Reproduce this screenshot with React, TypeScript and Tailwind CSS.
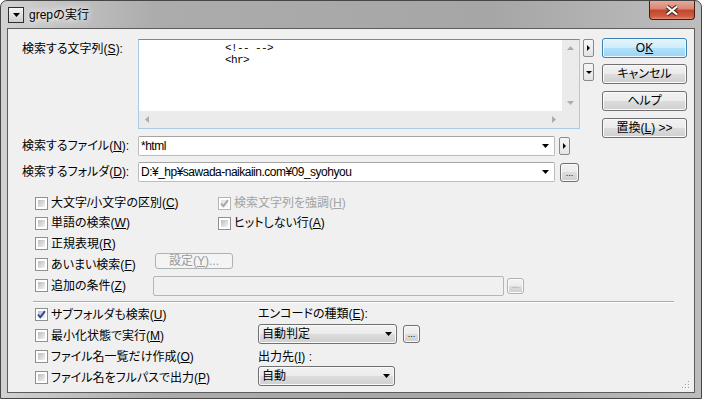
import React from "react";

type Node = React.ReactNode;

const face =
  "rounded-[3px] border border-[#707070] bg-[linear-gradient(#f2f2f2,#ebebeb_50%,#dddddd_50%,#cfcfcf)] shadow-[inset_0_0_0_1px_#fbfbfb]";
const btn = `flex items-center justify-center ${face}`;

const DownArrow = ({ color = "#000" }: { color?: string }) => (
  <svg width="7" height="4" viewBox="0 0 7 4">
    <polygon points="0,0 7,0 3.5,4" fill={color} />
  </svg>
);

function Box({ checked, disabled }: { checked?: boolean; disabled?: boolean }) {
  return (
    <div
      className={`relative w-[13px] h-[13px] shrink-0 border bg-white p-[2px] ${
        disabled ? "border-[#b4b4b4]" : "border-[#8e8f8f]"
      }`}
    >
      <div
        className={`w-full h-full ${
          disabled
            ? "bg-[linear-gradient(135deg,#e0e0e0,#f7f7f7)]"
            : "bg-[linear-gradient(135deg,#b9bdc2,#f2f2f2)]"
        }`}
      />
      {checked && (
        <svg className="absolute inset-0" width="11" height="11" viewBox="0 0 11 11">
          <path
            d="M2 5.5 L4.3 8.2 L9 2.2"
            fill="none"
            stroke={disabled ? "#a6a6a6" : "#2c4a9a"}
            strokeWidth="1.9"
          />
        </svg>
      )}
    </div>
  );
}

function Check({ label, checked, disabled }: { label: Node; checked?: boolean; disabled?: boolean }) {
  return (
    <div className="flex items-center">
      <Box checked={checked} disabled={disabled} />
      <span className={`ml-[3px] whitespace-nowrap ${disabled ? "text-[#a3a3a3]" : ""}`}>{label}</span>
    </div>
  );
}

function SideBtn({ dir, className = "" }: { dir: "right" | "down"; className?: string }) {
  return (
    <div
      className={`w-[11px] h-[18px] flex items-center justify-center rounded-[2px] border border-[#8a8a8a] bg-[linear-gradient(#f6f6f6,#e4e4e4)] ${className}`}
    >
      {dir === "right" ? (
        <svg width="3" height="6" viewBox="0 0 3 6">
          <polygon points="0,0 3,3 0,6" fill="#000" />
        </svg>
      ) : (
        <svg width="6" height="3" viewBox="0 0 6 3">
          <polygon points="0,0 6,0 3,3" fill="#000" />
        </svg>
      )}
    </div>
  );
}

function Dots({ className = "", disabled }: { className?: string; disabled?: boolean }) {
  return (
    <div
      className={`${btn} items-end pb-[3px] text-[9px] leading-none ${
        disabled ? "border-[#adb2b5] text-[#9a9a9a] bg-[#f4f4f4]" : ""
      } ${className}`}
    >
      ...
    </div>
  );
}

function Combo({ text, w }: { text: string; w: string }) {
  return (
    <div
      className={`${w} h-[20px] flex items-center rounded-[2px] border border-[#bcbcbc] border-t-[#a3a3a3] bg-white pl-[2px] pr-[5px]`}
    >
      <span className="flex-1 whitespace-nowrap tracking-[-0.5px]">{text}</span>
      <DownArrow />
    </div>
  );
}

function Select({ text, w }: { text: string; w: string }) {
  return (
    <div className={`${face} ${w} h-[20px] flex items-center justify-between pl-[3px] pr-[4px]`}>
      <span>{text}</span>
      <DownArrow />
    </div>
  );
}

const Tri = ({ pts }: { pts: string }) => (
  <svg width="7" height="7" viewBox="0 0 7 7">
    <polygon points={pts} fill="#acacac" />
  </svg>
);

function TextArea() {
  return (
    <div className="w-[442px] h-[90px] border border-[#a9cbe6] border-t-[#5d90bd] bg-white grid grid-cols-[1fr_17px] grid-rows-[1fr_17px]">
      <div className="pt-[2px] pl-[86px] whitespace-pre [font-family:'Liberation_Mono',monospace] text-[11px] tracking-[-0.6px] leading-[12px]">
        {"<!-- -->\n<hr>"}
      </div>
      <div className="bg-[#ebebeb] flex flex-col items-center justify-between py-[5px]">
        <Tri pts="0,5 7,5 3.5,1" />
        <Tri pts="0,2 7,2 3.5,6" />
      </div>
      <div className="bg-[#ebebeb] flex items-center justify-between px-[5px]">
        <Tri pts="5,0 5,7 1,3.5" />
        <Tri pts="2,0 2,7 6,3.5" />
      </div>
      <div className="bg-[#ebebeb]" />
    </div>
  );
}

export default function App() {
  return (
    <div className="w-[702px] h-[399px] [font-family:'Liberation_Sans','Noto_Sans_CJK_JP',sans-serif] [font-feature-settings:'palt'] text-[12px] leading-none text-black">
      <div className="w-full h-full flex flex-col rounded-t-[7px] border border-[#464646] bg-[linear-gradient(to_right,#d2d2d2,#acacac_22%,#a6a6a6_70%,#bdbdbd)]">
        {/* title bar */}
        <div className="h-[27px] flex items-start">
          <div className="ml-[7px] mt-[6px] w-[16px] h-[16px] flex items-center justify-center border border-[#2e2e2e] bg-[linear-gradient(#f4f4f4,#cdcdcd)]">
            <DownArrow />
          </div>
          <div className="ml-[5px] mt-[6px] h-[16px] flex items-center [font-feature-settings:normal] [text-shadow:0_0_6px_#fff,0_0_10px_#fff]">
            grepの実行
          </div>
          <div className="flex-1" />
          <div className="mr-[6px] w-[46px] h-[19px] rounded-b-[4px] border border-t-0 border-[#4a1c12] bg-[linear-gradient(#e8a99b,#d58672_45%,#c2452c_50%,#cf5a42_85%,#e08b74)] flex items-center justify-center">
            <svg width="14" height="11" viewBox="0 0 14 11">
              <path d="M2 1.5 L12 9.5 M12 1.5 L2 9.5" stroke="#4a2a24" strokeWidth="4.2" />
              <path d="M2 1.5 L12 9.5 M12 1.5 L2 9.5" stroke="#ffffff" strokeWidth="2.2" />
            </svg>
          </div>
        </div>

        {/* client area */}
        <div className="relative mx-[6px] h-[365px] border border-[#5c5c5c] bg-[#f0f0f0] flex flex-col">
          <div className="flex pt-[9px] pl-[14px]">
            <div className="w-[580px] flex flex-col">
              <div className="flex items-start mt-[1px]">
                <div className="w-[116px] h-[19px] flex items-center">
                  検索する文字列(<u>S</u>):
                </div>
                <TextArea />
                <div className="ml-[3px] flex flex-col">
                  <SideBtn dir="right" />
                  <SideBtn dir="down" className="mt-[6px]" />
                </div>
              </div>
              <div className="flex items-center mt-[7px] h-[20px]">
                <div className="w-[116px]">
                  検索するファイル(<u>N</u>):
                </div>
                <Combo text="*html" w="w-[417px]" />
                <SideBtn dir="right" className="ml-[4px]" />
              </div>
              <div className="flex items-center mt-[6px] h-[20px]">
                <div className="w-[116px]">
                  検索するフォルダ(<u>D</u>):
                </div>
                <Combo text="D:¥_hp¥sawada-naikaiin.com¥09_syohyou" w="w-[417px]" />
                <Dots className="ml-[5px] w-[19px] h-[19px]" />
              </div>
            </div>
            <div className="w-[85px] flex flex-col">
              <div className="h-[20px] flex items-center justify-center rounded-[3px] border border-[#3c7fb1] bg-[linear-gradient(#e3f4fd,#cdecfb_50%,#b1e1fa_50%,#9ad4f3)] shadow-[inset_0_0_0_1px_#eef9ff]">
                O<u>K</u>
              </div>
              <div className={`${btn} h-[20px] mt-[6px]`}>キャンセル</div>
              <div className={`${btn} h-[20px] mt-[7px]`}>ヘルプ</div>
              <div className={`${btn} h-[20px] mt-[7px]`}>
                置換(<u>L</u>) &gt;&gt;
              </div>
            </div>
          </div>

          {/* options */}
          <div className="flex flex-col mt-[11px] pl-[27px]">
            <div className="h-[20px] flex items-center">
              <div className="w-[183px]">
                <Check label={<>大文字/小文字の区別(<u>C</u>)</>} />
              </div>
              <Check checked disabled label={<>検索文字列を強調(<u>H</u>)</>} />
            </div>
            <div className="h-[20px] flex items-center">
              <div className="w-[183px]">
                <Check label={<>単語の検索(<u>W</u>)</>} />
              </div>
              <Check label={<>ヒットしない行(<u>A</u>)</>} />
            </div>
            <div className="h-[21px] flex items-center">
              <Check label={<>正規表現(<u>R</u>)</>} />
            </div>
            <div className="h-[21px] flex items-center">
              <div className="w-[120px]">
                <Check label={<>あいまい検索(<u>F</u>)</>} />
              </div>
              <div className="self-start -mt-[1px] w-[78px] h-[16px] flex items-center justify-center rounded-[3px] border border-[#adb2b5] bg-[#f4f4f4] text-[#9a9a9a]">
                設定(<u>Y</u>)...
              </div>
            </div>
            <div className="h-[21px] flex items-center">
              <div className="w-[118px]">
                <Check label={<>追加の条件(<u>Z</u>)</>} />
              </div>
              <div className="w-[351px] h-[20px] rounded-[2px] border border-[#b5b5b5] bg-[#f0f0f0]" />
              <Dots disabled className="ml-[3px] w-[17px] h-[16px]" />
            </div>
          </div>

          <div className="ml-[25px] mt-[5px] w-[641px] h-[2px] border-t border-[#a9a9a9] border-b border-b-white" />

          {/* bottom */}
          <div className="flex mt-[1px] pl-[27px]">
            <div className="w-[223px] flex flex-col">
              <div className="h-[21px] flex items-center">
                <Check checked label={<>サブフォルダも検索(<u>U</u>)</>} />
              </div>
              <div className="h-[21px] flex items-center">
                <Check label={<>最小化状態で実行(<u>M</u>)</>} />
              </div>
              <div className="h-[21px] flex items-center">
                <Check label={<>ファイル名一覧だけ作成(<u>O</u>)</>} />
              </div>
              <div className="h-[21px] flex items-center">
                <Check label={<>ファイル名をフルパスで出力(<u>P</u>)</>} />
              </div>
            </div>
            <div className="flex flex-col">
              <div className="h-[20px] flex items-center">
                エンコードの種類(<u>E</u>):
              </div>
              <div className="h-[20px] flex items-center">
                <Select text="自動判定" w="w-[139px]" />
                <Dots className="ml-[6px] w-[17px] h-[18px]" />
              </div>
              <div className="h-[22px] pt-[4px] flex items-center">
                出力先(<u>I</u>) :
              </div>
              <Select text="自動" w="w-[137px]" />
            </div>
          </div>

          <svg className="absolute right-[3px] bottom-[2px]" width="10" height="10" viewBox="0 0 10 10">
            {[
              [8, 2],
              [8, 5],
              [5, 5],
              [8, 8],
              [5, 8],
              [2, 8],
            ].map(([x, y]) => (
              <g key={`${x}-${y}`}>
                <rect x={x} y={y} width="1" height="1" fill="#fff" />
                <rect x={x - 1} y={y - 1} width="1" height="1" fill="#a0a0a0" />
              </g>
            ))}
          </svg>
        </div>
      </div>
    </div>
  );
}
